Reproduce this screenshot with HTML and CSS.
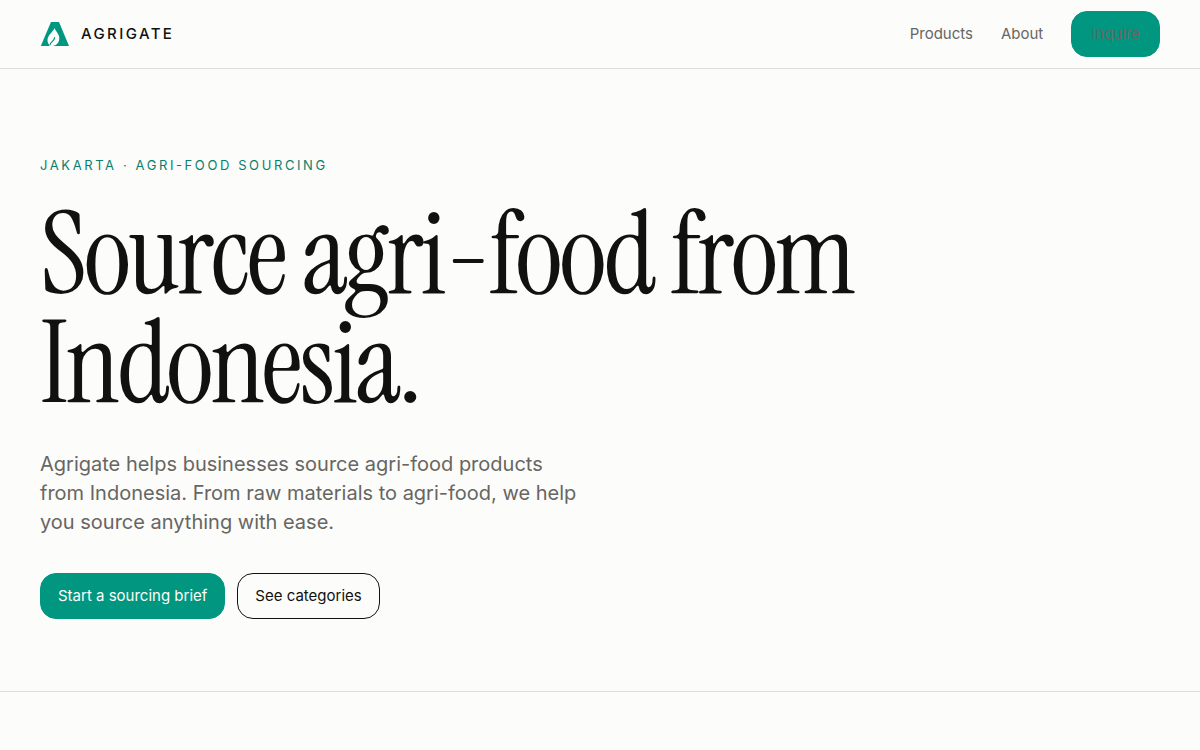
FILE: index.html
```html
<!DOCTYPE html>
<html lang="en">
<head>
<meta charset="utf-8">
<meta name="viewport" content="width=device-width, initial-scale=1">
<title>Agrigate</title>
<link rel="stylesheet" href="styles.css">
</head>
<body>
<header class="site-header">
  <a class="brand" href="#">
    <svg class="brand-mark" viewBox="0 0 30 26" aria-hidden="true">
      <path fill="#009680" d="M11 1h8L29 25H.8z"/>
      <path fill="#fcfcfa" d="M14.600 7C13 11 7.500 14 7.500 19.200c0 2.200.8 3.700 2.200 4.800l-.7 1h4c4-.8 6.300-3.700 6.300-8 0-4-3.300-6-4.700-10z"/>
      <path fill="none" stroke="#009680" stroke-width="1.200" stroke-linecap="round" d="M14.600 16.500c0 3.700-3.800 3.800-4.500 7.200"/>
    </svg>
    <span class="brand-name">AGRIGATE</span>
  </a>
  <nav class="site-nav" aria-label="Main">
    <a class="nav-link" href="#products">Products</a>
    <a class="nav-link" href="#about">About</a>
    <a class="nav-link button button-primary" href="#inquire">Inquire</a>
  </nav>
</header>
<main>
  <section class="hero">
    <p class="eyebrow">JAKARTA · AGRI-FOOD SOURCING</p>
    <h1 class="headline">Source agri-food from Indonesia.</h1>
    <p class="lead">Agrigate helps businesses source agri-food products from Indonesia. From raw materials to agri-food, we help you source anything with ease.</p>
    <div class="actions">
      <a class="button button-primary" href="#brief">Start a sourcing brief</a>
      <a class="button button-outline" href="#categories">See categories</a>
    </div>
  </section>
</main>
</body>
</html>
```
FILE: styles.css
```css
* { box-sizing: border-box; }
body {
  margin: 0;
  background: #fcfcfa;
  color: #111110;
  font-family: Inter, "Liberation Sans", sans-serif;
  font-size: 15px;
  line-height: 24px;
}
a { color: inherit; text-decoration: none; }
.site-header {
  display: flex;
  align-items: center;
  justify-content: space-between;
  padding: 11px 40px;
  border-bottom: 1px solid #dededc;
}
.brand { display: flex; align-items: center; gap: 11px; }
.brand-mark { width: 30px; height: 26px; }
.brand-name { font-weight: 500; letter-spacing: 0.16em; }
.site-nav { display: flex; align-items: center; gap: 28px; }
.site-nav .nav-link { color: #666663; }
.button {
  display: inline-flex;
  align-items: center;
  padding: 10px 19px;
  border: 1px solid transparent;
  border-radius: 16px;
}
.button-primary { background: #009680; border-color: #009680; color: #fcfcfa; }
.button-outline { border-color: #111110; }
.hero { padding: 88px 40px 72px; border-bottom: 1px solid #dededc; }
.eyebrow {
  margin: 0 0 27px;
  color: #08806e;
  font-size: 13px;
  line-height: 16px;
  letter-spacing: 0.2em;
}
.headline {
  max-width: 900px;
  margin: 0 0 32px;
  font-family: "Instrument Serif", "Liberation Serif", serif;
  font-size: 115px;
  font-weight: 400;
  line-height: 109px;
  letter-spacing: -0.025em;
}
.lead {
  max-width: 540px;
  margin: 0 0 36px;
  color: #666663;
  font-size: 20px;
  line-height: 29px;
}
.actions { display: flex; flex-wrap: wrap; gap: 12px; }
.actions .button { padding: 10px 17px; }
```
